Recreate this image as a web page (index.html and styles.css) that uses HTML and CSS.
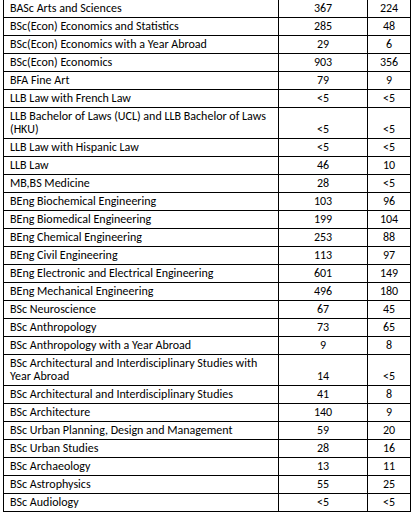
FILE: index.html
```html
<!DOCTYPE html>
<html>
<head>
<meta charset="utf-8">
<link rel="stylesheet" href="styles.css">
</head>
<body>
<table class="grid">
<colgroup><col class="c-name"><col class="c-a"><col class="c-b"></colgroup>
<tbody>
<tr><td>BASc Arts and Sciences</td><td>367</td><td>224</td></tr>
<tr><td>BSc(Econ) Economics and Statistics</td><td>285</td><td>48</td></tr>
<tr><td>BSc(Econ) Economics with a Year Abroad</td><td>29</td><td>6</td></tr>
<tr><td>BSc(Econ) Economics</td><td>903</td><td>356</td></tr>
<tr><td>BFA Fine Art</td><td>79</td><td>9</td></tr>
<tr><td>LLB Law with French Law</td><td>&lt;5</td><td>&lt;5</td></tr>
<tr><td>LLB Bachelor of Laws (UCL) and LLB Bachelor of Laws (HKU)</td><td>&lt;5</td><td>&lt;5</td></tr>
<tr><td>LLB Law with Hispanic Law</td><td>&lt;5</td><td>&lt;5</td></tr>
<tr><td>LLB Law</td><td>46</td><td>10</td></tr>
<tr><td>MB,BS Medicine</td><td>28</td><td>&lt;5</td></tr>
<tr><td>BEng Biochemical Engineering</td><td>103</td><td>96</td></tr>
<tr><td>BEng Biomedical Engineering</td><td>199</td><td>104</td></tr>
<tr><td>BEng Chemical Engineering</td><td>253</td><td>88</td></tr>
<tr><td>BEng Civil Engineering</td><td>113</td><td>97</td></tr>
<tr><td>BEng Electronic and Electrical Engineering</td><td>601</td><td>149</td></tr>
<tr><td>BEng Mechanical Engineering</td><td>496</td><td>180</td></tr>
<tr><td>BSc Neuroscience</td><td>67</td><td>45</td></tr>
<tr><td>BSc Anthropology</td><td>73</td><td>65</td></tr>
<tr><td>BSc Anthropology with a Year Abroad</td><td>9</td><td>8</td></tr>
<tr><td>BSc Architectural and Interdisciplinary Studies with Year Abroad</td><td>14</td><td>&lt;5</td></tr>
<tr><td>BSc Architectural and Interdisciplinary Studies</td><td>41</td><td>8</td></tr>
<tr><td>BSc Architecture</td><td>140</td><td>9</td></tr>
<tr><td>BSc Urban Planning, Design and Management</td><td>59</td><td>20</td></tr>
<tr><td>BSc Urban Studies</td><td>28</td><td>16</td></tr>
<tr><td>BSc Archaeology</td><td>13</td><td>11</td></tr>
<tr><td>BSc Astrophysics</td><td>55</td><td>25</td></tr>
<tr><td>BSc Audiology</td><td>&lt;5</td><td>&lt;5</td></tr>
</tbody>
</table>
</body>
</html>
```
FILE: styles.css
```css
html, body {
  margin: 0;
  padding: 0;
  background: #ffffff;
}
.grid {
  border-collapse: collapse;
  table-layout: fixed;
  width: 407px;
  margin: -1px 0 0 3px;
  font-family: Carlito, Calibri, Lato, "Noto Sans", sans-serif;
  font-size: 12px;
  line-height: 13px;
  color: #000;
}
.c-name { width: 275px; }
.c-a { width: 89px; }
.c-b { width: 43px; }
.grid td {
  border: 1px solid #000;
  padding: 2px 4px 2px 6px;
  vertical-align: bottom;
  height: 13px;
}
.grid td + td {
  text-align: center;
  padding: 2px 0;
}
```
